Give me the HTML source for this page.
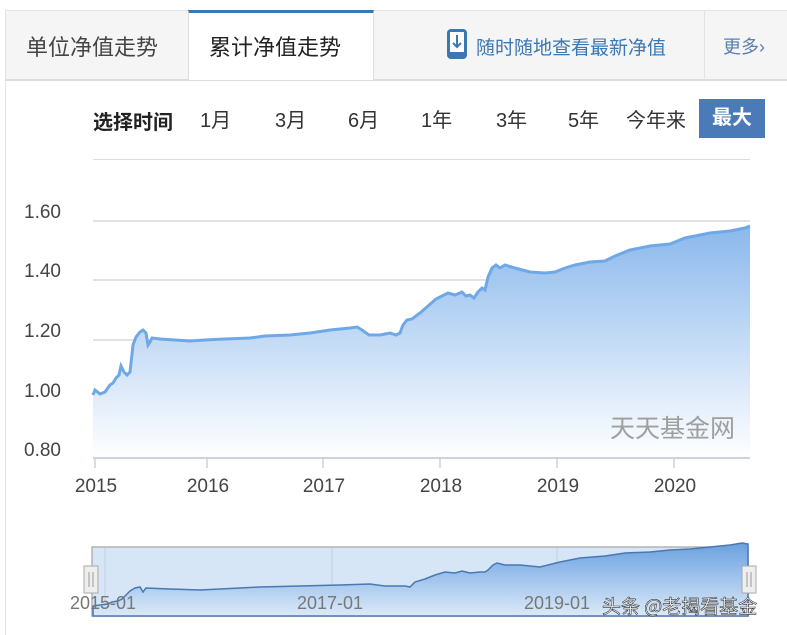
<!DOCTYPE html>
<html><head><meta charset="utf-8"><style>
body{margin:0;width:787px;height:635px;background:#fff;font-family:"Liberation Sans","Noto Sans CJK SC",sans-serif;position:relative;overflow:hidden}
.a{position:absolute}
</style></head><body>
<div class="a" style="left:5px;top:10px;width:782px;height:68px;background:#f5f5f5;border-top:1px solid #e3e3e3;border-bottom:2px solid #ddd"></div>
<div class="a" style="left:5px;top:78px;width:1px;height:557px;background:#e3e3e3"></div>
<div class="a" style="left:5px;top:10px;width:1px;height:68px;background:#e3e3e3"></div>
<div class="a" style="left:26px;top:30px;font-size:22px;color:#444">单位净值走势</div>
<div class="a" style="left:188px;top:10px;width:186px;height:70px;background:#fff;border-top:3px solid #3a78b4;border-left:1px solid #ddd;border-right:1px solid #ddd;box-sizing:border-box"></div>
<div class="a" style="left:209px;top:30px;font-size:22px;color:#222">累计净值走势</div>
<svg class="a" style="left:446px;top:28px" width="22" height="32"><rect x="1" y="1" width="20" height="30" rx="4" fill="#3a78b4"/><rect x="4" y="4" width="14" height="20" fill="#fff"/><path d="M11 7v12M7 15l4 4 4-4" stroke="#3a78b4" stroke-width="2" fill="none"/></svg>
<div class="a" style="left:476px;top:33px;font-size:19px;color:#3a78b4">随时随地查看最新净值</div>
<div class="a" style="left:704px;top:10px;width:1px;height:68px;background:#e3e3e3"></div>
<div class="a" style="left:723px;top:33px;font-size:18px;color:#5a7fae">更多›</div>
<div class="a" style="left:93px;top:106px;font-size:20px;font-weight:bold;color:#222">选择时间</div>
<div class="a" style="left:200px;top:104px;font-size:20px;color:#333">1月</div>
<div class="a" style="left:275px;top:104px;font-size:20px;color:#333">3月</div>
<div class="a" style="left:348px;top:104px;font-size:20px;color:#333">6月</div>
<div class="a" style="left:421px;top:104px;font-size:20px;color:#333">1年</div>
<div class="a" style="left:496px;top:104px;font-size:20px;color:#333">3年</div>
<div class="a" style="left:568px;top:104px;font-size:20px;color:#333">5年</div>
<div class="a" style="left:626px;top:104px;font-size:20px;color:#333">今年来</div>
<div class="a" style="left:699px;top:99px;width:66px;height:39px;background:#4a7ab8;color:#fff;font-size:20px;font-weight:bold;text-align:center;line-height:38px">最大</div>
<div class="a" style="left:93px;top:159px;width:657px;height:1px;background:#ddd"></div>
<svg class="a" style="left:0;top:0" width="787" height="635">
<defs><linearGradient id="g" x1="0" y1="0" x2="0" y2="1"><stop offset="0" stop-color="#8ab8ec"/><stop offset="1" stop-color="#fff"/></linearGradient>
<linearGradient id="g2" x1="0" y1="0" x2="0" y2="1"><stop offset="0" stop-color="#6aa0e0"/><stop offset="1" stop-color="#dbe9f8"/></linearGradient></defs>
<g stroke="#d8d8d8" stroke-width="1.5"><line x1="93" y1="221" x2="750" y2="221"/><line x1="93" y1="280" x2="750" y2="280"/><line x1="93" y1="340" x2="750" y2="340"/><line x1="93" y1="400" x2="750" y2="400"/></g>
<path id="p" d="M93,395 L95,390 100,394 105,392 110,385 113,383 116,378 119,375 121,366 124,372 127,375 130,372 133,345 136,337 140,332 143,330 146,333 148,345 150,342 152,338 160,339 175,340 190,341 205,340 225,339 250,338 265,336 290,335 310,333 330,330 350,328 357,327 362,330 369,335 380,335 390,333 396,335 400,333 403,325 407,320 412,319 420,313 428,306 436,299 442,296 448,293 455,295 462,292 466,296 470,295 474,298 478,292 482,288 485,290 488,277 492,268 496,265 500,268 505,265 515,268 530,272 545,273 555,272 565,268 575,265 590,262 605,261 615,256 630,250 650,246 670,244 685,238 695,236 710,233 730,231 745,228 750,226" fill="none"/>
<path d="M93,395 L95,390 100,394 105,392 110,385 113,383 116,378 119,375 121,366 124,372 127,375 130,372 133,345 136,337 140,332 143,330 146,333 148,345 150,342 152,338 160,339 175,340 190,341 205,340 225,339 250,338 265,336 290,335 310,333 330,330 350,328 357,327 362,330 369,335 380,335 390,333 396,335 400,333 403,325 407,320 412,319 420,313 428,306 436,299 442,296 448,293 455,295 462,292 466,296 470,295 474,298 478,292 482,288 485,290 488,277 492,268 496,265 500,268 505,265 515,268 530,272 545,273 555,272 565,268 575,265 590,262 605,261 615,256 630,250 650,246 670,244 685,238 695,236 710,233 730,231 745,228 750,226 L750,458 L93,458Z" fill="url(#g)"/>
<use href="#p" stroke="#6fa8e6" stroke-width="3"/>
<line x1="93" y1="458" x2="750" y2="458" stroke="#ccd3de" stroke-width="2"/>
<g stroke="#ccd3de" stroke-width="1.5"><line x1="95" y1="458" x2="95" y2="468"/><line x1="207" y1="458" x2="207" y2="468"/><line x1="323" y1="458" x2="323" y2="468"/><line x1="440" y1="458" x2="440" y2="468"/><line x1="557" y1="458" x2="557" y2="468"/><line x1="674" y1="458" x2="674" y2="468"/></g>
<g font-family="Liberation Sans,sans-serif" font-size="19" fill="#444"><text x="24" y="218">1.60</text><text x="24" y="277">1.40</text><text x="24" y="337">1.20</text><text x="24" y="397">1.00</text><text x="24" y="456">0.80</text>
<g text-anchor="middle"><text x="96" y="492">2015</text><text x="208" y="492">2016</text><text x="324" y="492">2017</text><text x="441" y="492">2018</text><text x="558" y="492">2019</text><text x="675" y="492">2020</text></g></g>
<text x="610" y="437" font-size="25" fill="#8a8a8a" font-family="Noto Sans CJK SC,sans-serif" opacity=".8">天天基金网</text>
<rect x="92" y="547" width="656" height="69" fill="#d6e6f7" stroke="#b4b4b4" stroke-width="1.5"/>
<g stroke="#c4d2e2"><line x1="105" y1="548" x2="105" y2="616"/><line x1="332" y1="548" x2="332" y2="616"/><line x1="557" y1="548" x2="557" y2="616"/></g>
<path d="M93,606 L100,605 108,604 112,602 118,601 122,599 125,596 130,591 135,588 140,587 143,592 146,588 170,589 200,590 240,588 260,587 300,586 340,585 370,584 385,586 395,586 405,586 410,587 415,582 425,579 435,575 445,572 455,573 462,571 470,573 480,572 485,572 488,570 493,565 497,563 505,565 520,565 540,567 560,562 580,558 605,556 625,553 650,552 670,550 690,549 710,547 730,545 742,543 748,544 L748,616 L93,616Z" fill="url(#g2)" stroke="#4a78b0" stroke-width="1.5"/>
<rect x="84" y="566" width="14" height="27" fill="#eee" stroke="#aaa"/><line x1="89" y1="572" x2="89" y2="587" stroke="#999"/><line x1="93" y1="572" x2="93" y2="587" stroke="#999"/>
<rect x="742" y="566" width="14" height="27" fill="#eee" stroke="#aaa"/><line x1="747" y1="572" x2="747" y2="587" stroke="#999"/><line x1="751" y1="572" x2="751" y2="587" stroke="#999"/>
<g font-family="Liberation Sans,sans-serif" font-size="18" fill="#777"><text x="70" y="609">2015-01</text><text x="297" y="609">2017-01</text><text x="524" y="609">2019-01</text></g>
<text x="602" y="613" font-size="19" fill="#fff" stroke="#333" stroke-width="0.6" font-family="Noto Sans CJK SC,sans-serif">头条 @老揭看基金</text>
</svg>
</body></html>
